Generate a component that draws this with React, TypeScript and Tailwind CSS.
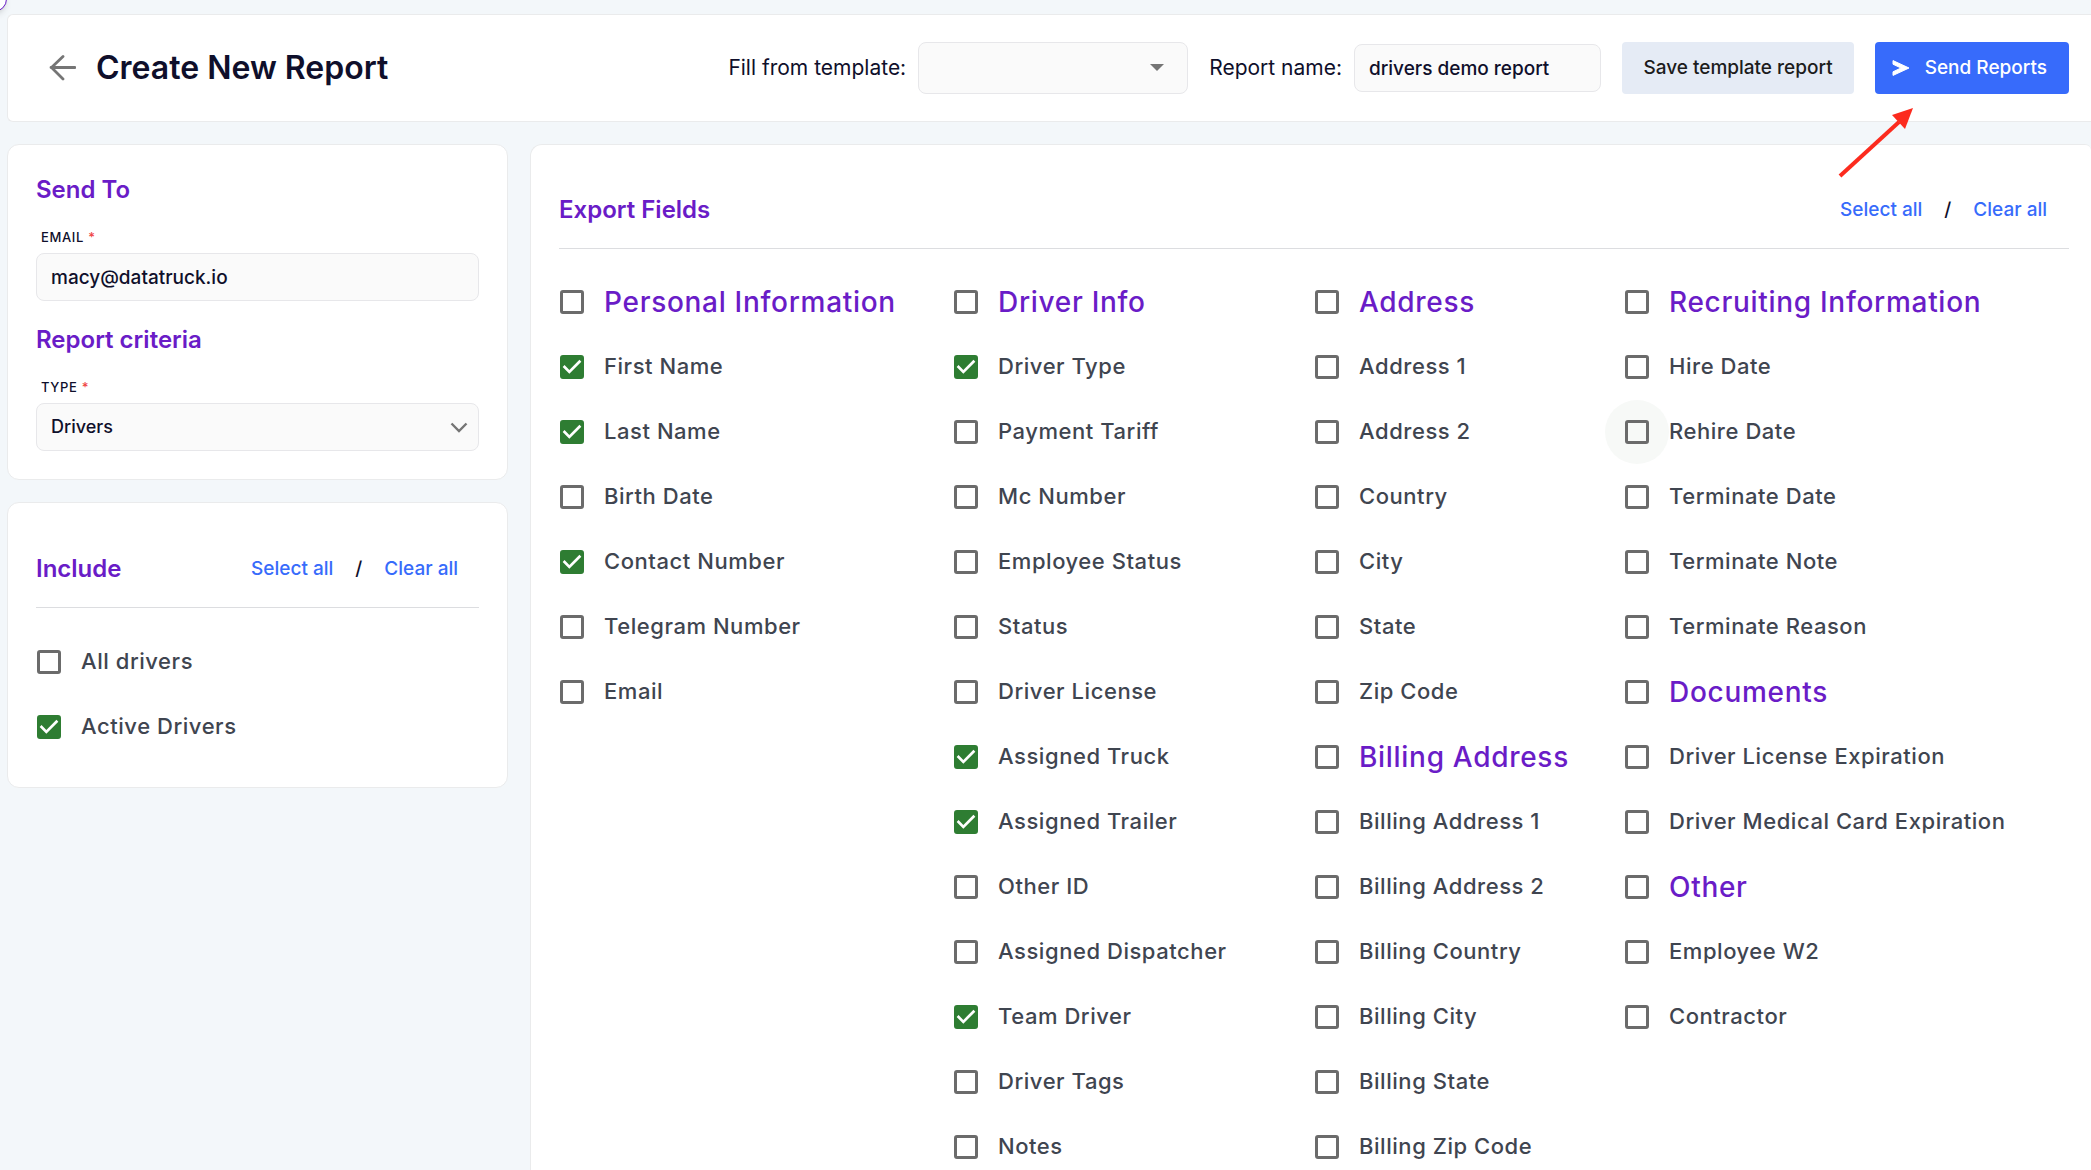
import React, { useState } from 'react';
import { clsx } from 'clsx';

interface Field {
  name: string;
  heading?: boolean;
  checked?: boolean;
  hovered?: boolean;
}

const columns: Field[][] = [
  [
    { name: 'Personal Information', heading: true },
    { name: 'First Name', checked: true },
    { name: 'Last Name', checked: true },
    { name: 'Birth Date' },
    { name: 'Contact Number', checked: true },
    { name: 'Telegram Number' },
    { name: 'Email' },
  ],
  [
    { name: 'Driver Info', heading: true },
    { name: 'Driver Type', checked: true },
    { name: 'Payment Tariff' },
    { name: 'Mc Number' },
    { name: 'Employee Status' },
    { name: 'Status' },
    { name: 'Driver License' },
    { name: 'Assigned Truck', checked: true },
    { name: 'Assigned Trailer', checked: true },
    { name: 'Other ID' },
    { name: 'Assigned Dispatcher' },
    { name: 'Team Driver', checked: true },
    { name: 'Driver Tags' },
    { name: 'Notes' },
  ],
  [
    { name: 'Address', heading: true },
    { name: 'Address 1' },
    { name: 'Address 2' },
    { name: 'Country' },
    { name: 'City' },
    { name: 'State' },
    { name: 'Zip Code' },
    { name: 'Billing Address', heading: true },
    { name: 'Billing Address 1' },
    { name: 'Billing Address 2' },
    { name: 'Billing Country' },
    { name: 'Billing City' },
    { name: 'Billing State' },
    { name: 'Billing Zip Code' },
  ],
  [
    { name: 'Recruiting Information', heading: true },
    { name: 'Hire Date' },
    { name: 'Rehire Date', hovered: true },
    { name: 'Terminate Date' },
    { name: 'Terminate Note' },
    { name: 'Terminate Reason' },
    { name: 'Documents', heading: true },
    { name: 'Driver License Expiration' },
    { name: 'Driver Medical Card Expiration' },
    { name: 'Other', heading: true },
    { name: 'Employee W2' },
    { name: 'Contractor' },
  ],
];

const FieldCheckbox: React.FC<{ field: Field }> = ({ field }) => (
  <label className="flex h-[65px] w-fit cursor-pointer items-center gap-5 whitespace-nowrap">
    <span
      className={clsx(
        'grid size-16 shrink-0 place-items-center rounded-full -m-5',
        field.hovered && 'bg-[#f7f9f7]'
      )}
    >
      <input
        type="checkbox"
        defaultChecked={field.checked}
        className="peer col-start-1 row-start-1 size-6 cursor-pointer appearance-none rounded-[3px] border-3 border-[#6b6b6b] checked:border-[#2e7d32] checked:bg-[#2e7d32]"
      />
      <svg
        viewBox="3 3 18 18"
        className="pointer-events-none col-start-1 row-start-1 hidden size-6 fill-white peer-checked:block"
      >
        <path d="M10 17l-5-5 1.41-1.41L10 14.17l7.59-7.59L19 8l-9 9z" />
      </svg>
    </span>
    <span
      className={clsx(
        'font-medium tracking-wide',
        field.heading ? 'text-[28px] text-[#6a1cc7]' : 'text-[22px] text-[#3f4550]'
      )}
    >
      {field.name}
    </span>
  </label>
);

const SelectLinks = () => (
  <div className="flex items-center gap-[22px] text-[19px] leading-8 font-medium">
    <button type="button" className="text-[#376bfb]">Select all</button>
    <span>/</span>
    <button type="button" className="text-[#376bfb]">Clear all</button>
  </div>
);

const fieldBox = 'h-12 rounded-lg border border-[#e7e7ea] bg-[#fafafa] font-medium';
const card = 'rounded-xl border border-[#eaebec] bg-white';
const sectionTitle = 'text-2xl leading-8 font-semibold text-[#6a1cc7]';
const caption = 'px-[5px] text-[13px] leading-5 font-medium tracking-wider';

export default function App() {
  const [email, setEmail] = useState('macy@datatruck.io');
  const [reportName, setReportName] = useState('drivers demo report');

  return (
    <div className="relative h-screen overflow-hidden bg-[#f3f7fa] pt-3.5 pl-[7px] font-[Inter,sans-serif] text-[#0f0f2b]">
      {/* Sidebar toggle peeking in from the corner */}
      <div className="absolute -top-3.5 -left-[19px] size-[26px] rounded-full border border-[#6a1cc7] bg-white shadow-md" />

      <header className="flex h-[108px] items-center justify-between rounded-l-md border border-r-0 border-[#eaebec] bg-white pr-[22px] pl-10">
        <div className="flex items-center gap-5">
          <button type="button" aria-label="Back">
            <svg viewBox="0 0 28 28" className="size-7 fill-none stroke-[#757575] stroke-[2.8]">
              <path d="M27 13.5H3M15 2.5L3.5 13.5l11.5 11.5" strokeLinecap="round" strokeLinejoin="round" />
            </svg>
          </button>
          <h1 className="text-[32px] leading-10 font-semibold">Create New Report</h1>
        </div>

        <div className="flex items-center gap-[21px]">
          <div className="flex items-center gap-3">
            <label htmlFor="template" className="text-[21px]">Fill from template:</label>
            <div className="grid items-center">
              <select
                id="template"
                className="col-start-1 row-start-1 h-13 w-[270px] appearance-none rounded-lg border border-[#e7e7ea] bg-[#fafafa] px-4"
              >
                <option value="" />
              </select>
              <svg
                viewBox="0 0 14 8"
                className="pointer-events-none col-start-1 row-start-1 mr-6 h-2 w-3.5 justify-self-end fill-[#757575]"
              >
                <path d="M0 0h14L7 7z" />
              </svg>
            </div>
          </div>
          <div className="flex items-center gap-3">
            <label htmlFor="report-name" className="text-[21px]">Report name:</label>
            <input
              id="report-name"
              value={reportName}
              onChange={(e) => setReportName(e.target.value)}
              className={clsx(fieldBox, 'w-[247px] px-3.5 text-[19px]')}
            />
          </div>
          <button
            type="button"
            className="h-13 w-[232px] rounded bg-[#e5ebf5] text-[19px] font-medium text-[#1c1c1c]"
          >
            Save template report
          </button>
          <div className="relative">
            <button
              type="button"
              className="flex h-13 w-[194px] items-center justify-between rounded bg-[#376bfb] pr-[22px] pl-[17px] text-[19px] font-medium text-white"
            >
              <svg viewBox="0 0 18 16" className="h-4 w-[18px] fill-white stroke-white stroke-1">
                <path d="M1 0.6L17 8L1 15.4V11.8L9 8L1 4.2Z" strokeLinejoin="round" />
              </svg>
              Send Reports
            </button>
            <svg viewBox="0 0 80 76" className="pointer-events-none absolute top-[62px] -left-[39px] h-[76px] w-20">
              <path d="M4 72L63 18" className="stroke-[#fc2b1e] stroke-4" />
              <path d="M77 4L56 11L69 25Z" className="fill-[#fc2b1e]" />
            </svg>
          </div>
        </div>
      </header>

      <div className="mt-[22px] flex items-start gap-[22px]">
        <aside className="flex w-[501px] shrink-0 flex-col gap-[22px]">
          <section className={clsx(card, 'px-7 pt-[29px] pb-7')}>
            <h2 className={sectionTitle}>Send To</h2>
            <label htmlFor="email" className={clsx(caption, 'mt-[21px] mb-1.5 block')}>
              EMAIL <span className="text-[#ef4444]">*</span>
            </label>
            <input
              id="email"
              type="email"
              value={email}
              onChange={(e) => setEmail(e.target.value)}
              className={clsx(fieldBox, 'w-full px-3.5 text-[19px]')}
            />
            <h2 className={clsx(sectionTitle, 'mt-[23px]')}>Report criteria</h2>
            <label htmlFor="type" className={clsx(caption, 'mt-[21px] mb-1.5 block')}>
              TYPE <span className="text-[#ef4444]">*</span>
            </label>
            <div className="grid items-center">
              <select
                id="type"
                className={clsx(fieldBox, 'col-start-1 row-start-1 w-full appearance-none px-3.5 text-lg')}
              >
                <option>Drivers</option>
              </select>
              <svg
                viewBox="0 0 18 11"
                className="pointer-events-none col-start-1 row-start-1 mr-[11px] h-[11px] w-[18px] justify-self-end fill-none stroke-[#757575] stroke-[2.4]"
              >
                <path d="M1.5 1.5L9 9l7.5-7.5" />
              </svg>
            </div>
          </section>

          <section className={clsx(card, 'px-7 pt-[50px] pb-7')}>
            <div className="flex items-center justify-between border-b border-[#dcdde0] pr-[21px] pb-[22px]">
              <h2 className={sectionTitle}>Include</h2>
              <SelectLinks />
            </div>
            <div className="mt-[21px] pl-px">
              <FieldCheckbox field={{ name: 'All drivers' }} />
              <FieldCheckbox field={{ name: 'Active Drivers', checked: true }} />
            </div>
          </section>
        </aside>

        <main className="min-w-0 grow rounded-tl-xl rounded-tr-md border border-r-0 border-[#eaebec] bg-white pt-[49px] pr-[22px] pb-7 pl-7">
          <div className="flex items-center justify-between border-b border-[#dcdde0] pr-[22px] pb-[22px]">
            <h2 className={sectionTitle}>Export Fields</h2>
            <SelectLinks />
          </div>
          <div className="mt-5 grid grid-cols-[394fr_361fr_310fr_444fr] pl-px">
            {columns.map((fields) => (
              <div key={fields[0].name}>
                {fields.map((field) => (
                  <FieldCheckbox key={field.name} field={field} />
                ))}
              </div>
            ))}
          </div>
        </main>
      </div>
    </div>
  );
}
